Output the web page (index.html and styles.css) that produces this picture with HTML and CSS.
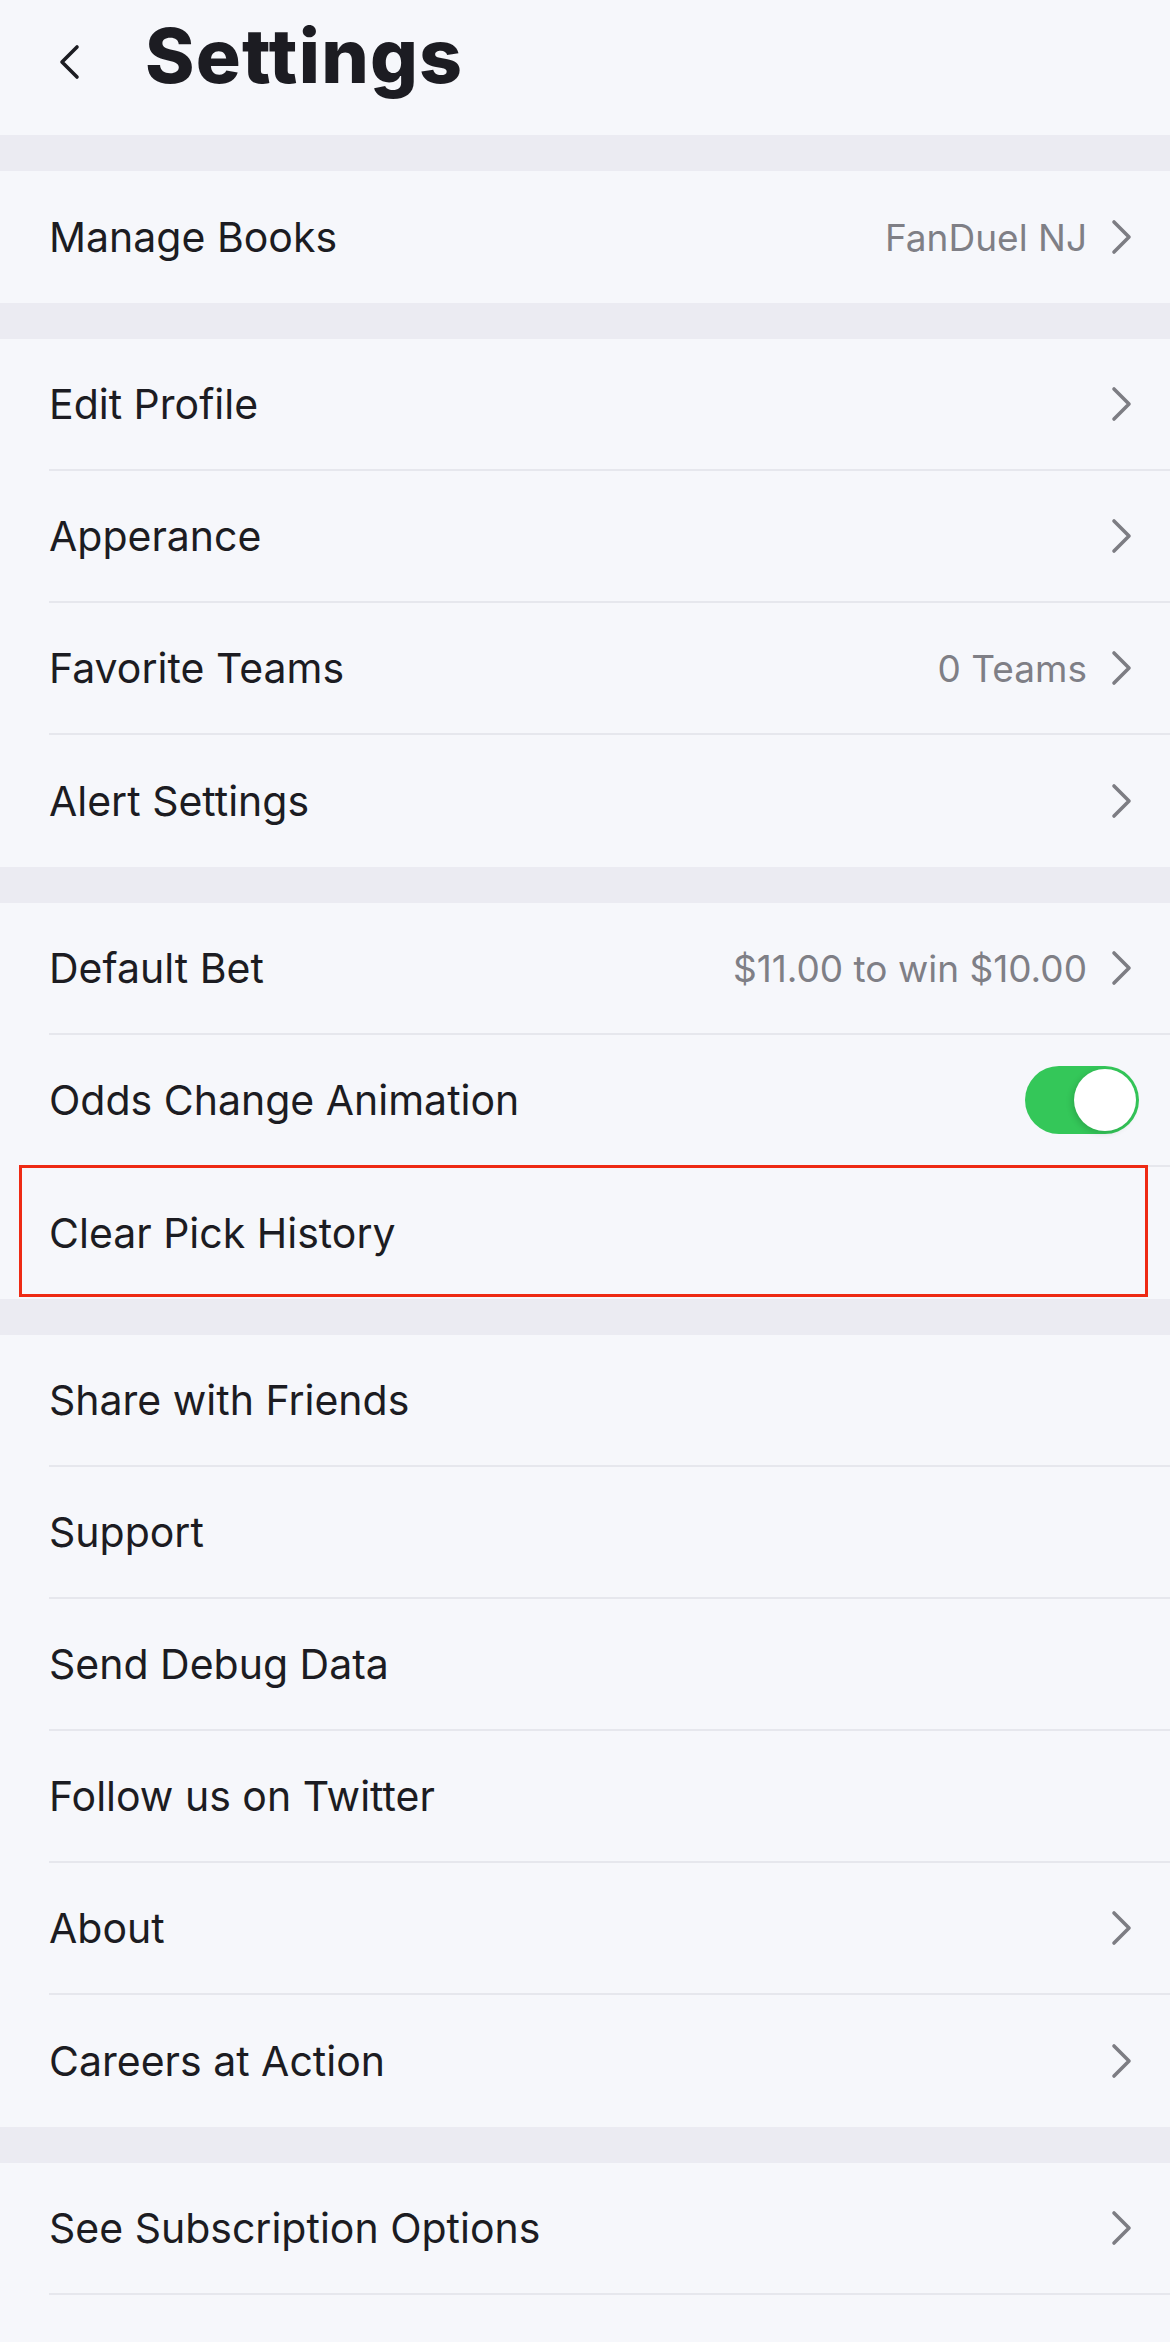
FILE: index.html
```html
<!DOCTYPE html>
<html lang="en">
<head>
  <meta charset="UTF-8">
  <title>Settings</title>
<link rel="stylesheet" href="styles.css">
</head>
<body>
<div class="header">
    <svg class="back" width="24" height="36" viewBox="0 0 24 36"><path d="M19 3 L4 18 L19 33" fill="none" stroke="#1c1c22" stroke-width="3.6" stroke-linecap="round" stroke-linejoin="round"/></svg>
    <h1>Settings</h1>
</div>

<div class="group">
    <div class="row"><span class="label">Manage Books</span><span class="value">FanDuel NJ</span><svg class="chev" width="24" height="36" viewBox="0 0 24 36"><path d="M4 3 L19 18 L4 33" fill="none" stroke="#7d7d83" stroke-width="3.6" stroke-linecap="round" stroke-linejoin="round"/></svg></div>
</div>

<div class="group">
    <div class="row"><span class="label">Edit Profile</span><svg class="chev" width="24" height="36" viewBox="0 0 24 36"><path d="M4 3 L19 18 L4 33" fill="none" stroke="#7d7d83" stroke-width="3.6" stroke-linecap="round" stroke-linejoin="round"/></svg></div>
    <div class="row"><span class="label">Apperance</span><svg class="chev" width="24" height="36" viewBox="0 0 24 36"><path d="M4 3 L19 18 L4 33" fill="none" stroke="#7d7d83" stroke-width="3.6" stroke-linecap="round" stroke-linejoin="round"/></svg></div>
    <div class="row"><span class="label">Favorite Teams</span><span class="value">0 Teams</span><svg class="chev" width="24" height="36" viewBox="0 0 24 36"><path d="M4 3 L19 18 L4 33" fill="none" stroke="#7d7d83" stroke-width="3.6" stroke-linecap="round" stroke-linejoin="round"/></svg></div>
    <div class="row"><span class="label">Alert Settings</span><svg class="chev" width="24" height="36" viewBox="0 0 24 36"><path d="M4 3 L19 18 L4 33" fill="none" stroke="#7d7d83" stroke-width="3.6" stroke-linecap="round" stroke-linejoin="round"/></svg></div>
</div>

<div class="group">
    <div class="row"><span class="label">Default Bet</span><span class="value">$11.00 to win $10.00</span><svg class="chev" width="24" height="36" viewBox="0 0 24 36"><path d="M4 3 L19 18 L4 33" fill="none" stroke="#7d7d83" stroke-width="3.6" stroke-linecap="round" stroke-linejoin="round"/></svg></div>
    <div class="row"><span class="label">Odds Change Animation</span><div class="toggle on"><div class="knob"></div></div></div>
    <div class="row marked"><span class="label">Clear Pick History</span></div>
</div>

<div class="group">
    <div class="row"><span class="label">Share with Friends</span></div>
    <div class="row"><span class="label">Support</span></div>
    <div class="row"><span class="label">Send Debug Data</span></div>
    <div class="row"><span class="label">Follow us on Twitter</span></div>
    <div class="row"><span class="label">About</span><svg class="chev" width="24" height="36" viewBox="0 0 24 36"><path d="M4 3 L19 18 L4 33" fill="none" stroke="#7d7d83" stroke-width="3.6" stroke-linecap="round" stroke-linejoin="round"/></svg></div>
    <div class="row"><span class="label">Careers at Action</span><svg class="chev" width="24" height="36" viewBox="0 0 24 36"><path d="M4 3 L19 18 L4 33" fill="none" stroke="#7d7d83" stroke-width="3.6" stroke-linecap="round" stroke-linejoin="round"/></svg></div>
</div>

<div class="group">
    <div class="row"><span class="label">See Subscription Options</span><svg class="chev" width="24" height="36" viewBox="0 0 24 36"><path d="M4 3 L19 18 L4 33" fill="none" stroke="#7d7d83" stroke-width="3.6" stroke-linecap="round" stroke-linejoin="round"/></svg></div>
    <div class="row"></div>
</div>
</body>
</html>
```

FILE: styles.css
```css
* {
    font-family: Inter, "Noto Sans", sans-serif;
    box-sizing: border-box;
}
body {
    margin: 0;
    background-color: #ebebf2;
    color: #1c1c22;
}
.header {
    display: flex;
    align-items: center;
    height: 135px;
    padding: 0 0 24px 58px;
    background-color: #f6f7fb;
}
.header .back {
    margin-top: 12px;
}
.header h1 {
    margin: 0 0 0 63px;
    font-size: 75px;
    line-height: 1;
    font-weight: 800;
    letter-spacing: 1.2px;
}
.group {
    margin-top: 36px;
    padding-left: 49px;
    background-color: #f6f7fb;
}
.row {
    position: relative;
    display: flex;
    align-items: center;
    height: 132px;
    padding-right: 36px;
    border-bottom: 2px solid #e6e7ed;
}
.row:last-child {
    border-bottom: none;
}
.label {
    flex: 1;
    font-size: 41px;
    line-height: 1;
}
.value {
    font-size: 37px;
    line-height: 1;
    color: #7f7f86;
    margin-right: 23px;
}
.chev {
    display: block;
}
.toggle {
    position: relative;
    width: 114px;
    height: 68px;
    border-radius: 34px;
    background-color: #e3e3e8;
    margin-right: -5px;
}
.toggle.on {
    background-color: #34c759;
}
.toggle .knob {
    position: absolute;
    top: 3px;
    right: 3px;
    width: 62px;
    height: 62px;
    border-radius: 50%;
    background-color: #fff;
    box-shadow: -2px 2px 6px rgba(0,0,0,0.15);
}
/* red highlight round the row */
.row.marked:after {
    content: "";
    position: absolute;
    left: -30px;
    right: 22px;
    top: -2px;
    bottom: 2px;
    border: 3px solid #ee2a14;
}
```
